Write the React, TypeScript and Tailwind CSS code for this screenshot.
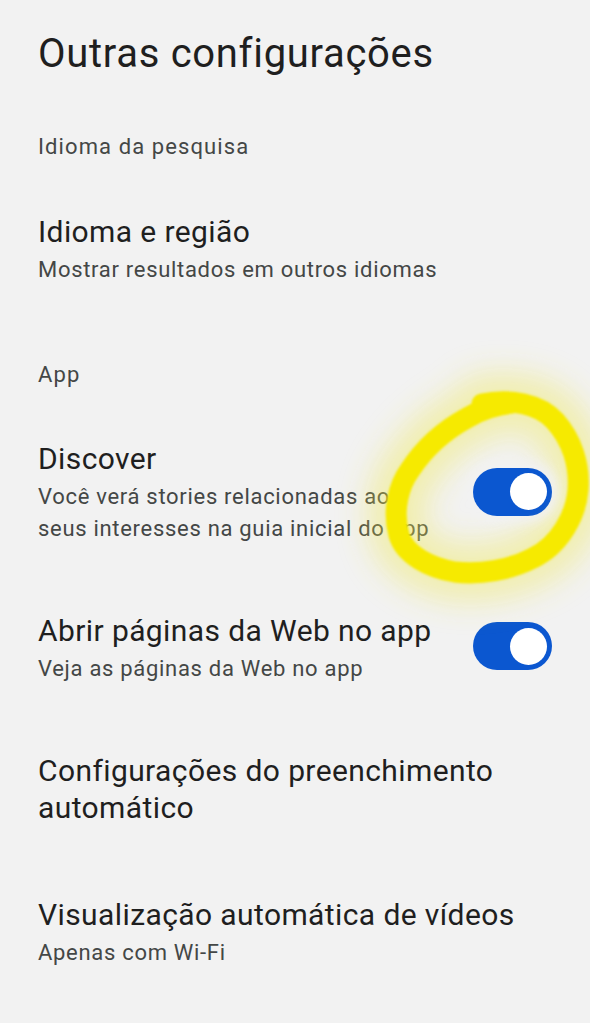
import React from "react";

const FONT = { fontFamily: "Roboto, 'Noto Sans', sans-serif" };

function Toggle({ className = "" }: { className?: string }) {
  return (
    <div
      className={`flex h-[48px] w-[79px] shrink-0 items-center justify-end rounded-full bg-[#0b57d0] pr-[5px] ${className}`}
    >
      <div className="h-[37px] w-[37px] rounded-full bg-white" />
    </div>
  );
}

function SectionHeader({ children, className = "" }: { children: React.ReactNode; className?: string }) {
  return (
    <div className={`text-[22px] leading-[28px] tracking-[1.1px] text-[#444746] ${className}`}>{children}</div>
  );
}

function ItemTitle({ children }: { children: React.ReactNode }) {
  return <div className="text-[30px] leading-[36px] tracking-[0.4px] text-[#1f1f1f]">{children}</div>;
}

function ItemSub({ children }: { children: React.ReactNode }) {
  return (
    <div className="mt-[4px] text-[22px] leading-[32px] tracking-[0.7px] text-[#444746]">{children}</div>
  );
}

const RING =
  "M 482 404 C 510 398, 540 404, 555 421 C 572 440, 580 465, 578 490 C 576 515, 560 545, 533 558 C 510 570, 480 575, 455 572 C 430 568, 405 555, 399 535 C 392 510, 399 485, 410 470 C 425 447, 445 430, 467 418 C 480 410, 495 405, 512 403";

function Highlight() {
  // hand-drawn marker ring around the Discover switch
  return (
    <svg
      className="pointer-events-none absolute left-0 top-0"
      width="590"
      height="1023"
      viewBox="0 0 590 1023"
    >
      <defs>
        <filter id="glow" filterUnits="userSpaceOnUse" x="0" y="0" width="590" height="1023">
          <feGaussianBlur stdDeviation="15" />
        </filter>
        <filter id="soft" x="-20%" y="-20%" width="140%" height="140%">
          <feGaussianBlur stdDeviation="0.8" />
        </filter>
        <filter id="holeBlur" filterUnits="userSpaceOnUse" x="0" y="0" width="590" height="1023">
          <feGaussianBlur stdDeviation="6" />
        </filter>
        <mask id="keepSwitch" maskUnits="userSpaceOnUse" x="0" y="0" width="590" height="1023">
          <rect x="0" y="0" width="590" height="1023" fill="white" />
          <rect x="466" y="461" width="93" height="61" rx="30" fill="black" filter="url(#holeBlur)" />
        </mask>
      </defs>
      <g mask="url(#keepSwitch)">
        <path
          d={RING}
          fill="none"
          stroke="#f1e94a"
          strokeOpacity="0.4"
          strokeWidth="58"
          strokeLinecap="round"
          filter="url(#glow)"
        />
      </g>
      <path
        d={RING}
        fill="none"
        stroke="#f6ea06"
        strokeWidth="21"
        strokeLinecap="round"
        strokeLinejoin="round"
        filter="url(#soft)"
      />
    </svg>
  );
}

export default function App() {
  return (
    <div className="relative h-[1023px] w-[590px] overflow-hidden bg-[#f2f2f2]" style={FONT}>
      <div className="px-[38px] pt-[30px]">
        <h1 className="text-[40px] leading-[48px] tracking-[0.7px] text-[#1f1f1f]">Outras configurações</h1>

        <SectionHeader className="mt-[55px]">Idioma da pesquisa</SectionHeader>

        <div className="mt-[53px]">
          <ItemTitle>Idioma e região</ItemTitle>
          <ItemSub>Mostrar resultados em outros idiomas</ItemSub>
        </div>

        <SectionHeader className="mt-[75px]">App</SectionHeader>

        <div className="mt-[52px] flex items-center gap-6">
          <div className="min-w-0 flex-1">
            <ItemTitle>Discover</ItemTitle>
            <ItemSub>Você verá stories relacionadas aos seus interesses na guia inicial do app</ItemSub>
          </div>
          <Toggle className="mb-[3px]" />
        </div>

        <div className="mt-[68px] flex items-center gap-6">
          <div className="min-w-0 flex-1">
            <ItemTitle>Abrir páginas da Web no app</ItemTitle>
            <ItemSub>Veja as páginas da Web no app</ItemSub>
          </div>
          <Toggle className="mb-[6px]" />
        </div>

        <div className="mt-[67px] text-[30px] leading-[37px] tracking-[0.4px] text-[#1f1f1f]">
          Configurações do preenchimento automático
        </div>

        <div className="mt-[71px]">
          <ItemTitle>Visualização automática de vídeos</ItemTitle>
          <ItemSub>Apenas com Wi-Fi</ItemSub>
        </div>
      </div>
      <Highlight />
    </div>
  );
}
